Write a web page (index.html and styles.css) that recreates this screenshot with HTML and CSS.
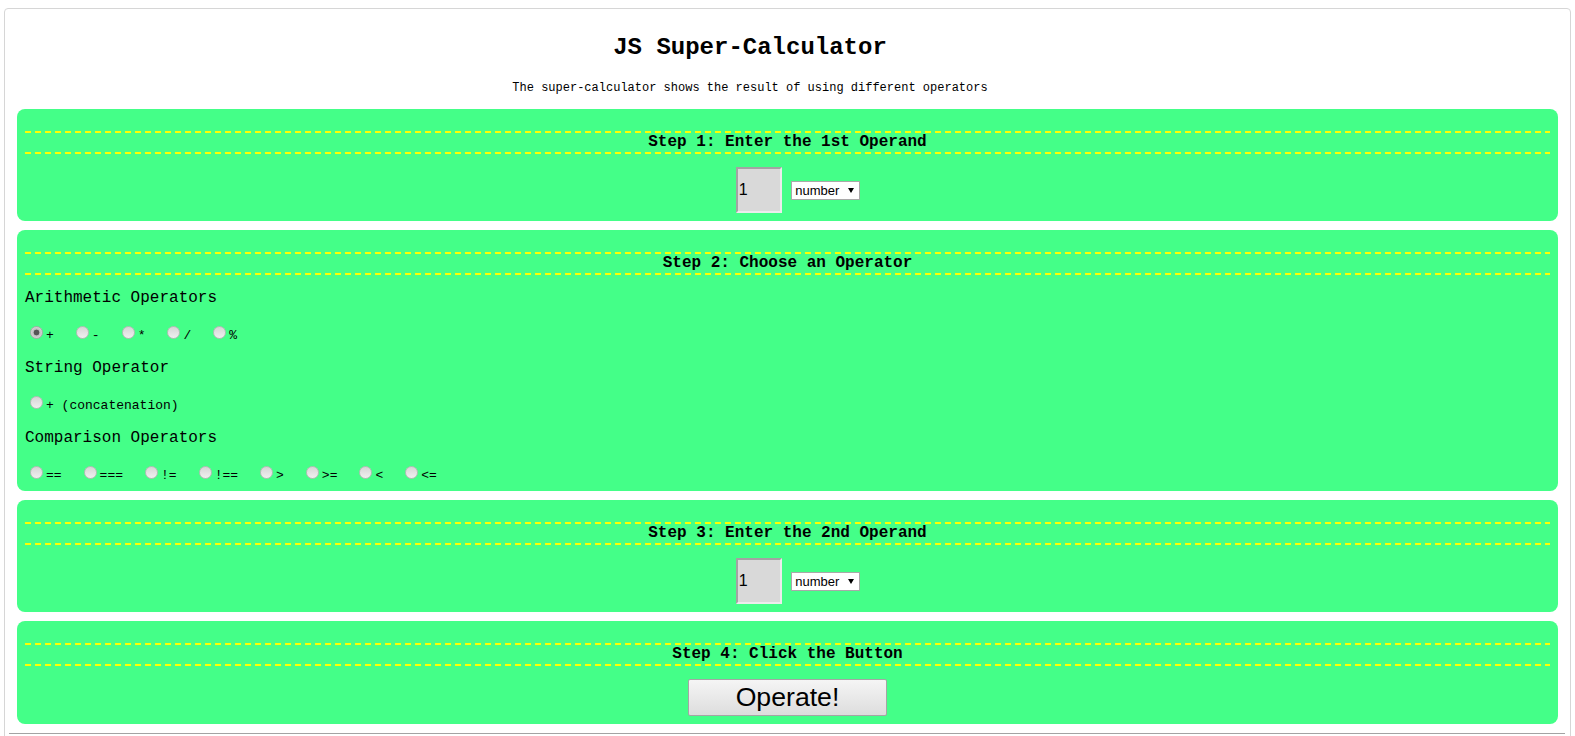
FILE: index.html
```
<!DOCTYPE html>
<html>
<head>
<meta charset="utf-8">
<title>JS Super-Calculator</title>
<link rel="stylesheet" href="styles.css">
</head>
<body>
<div class="page">
  <header class="head">
    <h1 class="title">JS Super-Calculator</h1>
    <p class="sub">The super-calculator shows the result of using different operators</p>
  </header>

  <section class="panel">
    <h2 class="step">Step 1: Enter the 1st Operand</h2>
    <div class="operand"><input class="num" type="text" value="1"> <span class="sel"><select><option>number</option><option>string</option></select></span></div>
  </section>

  <section class="panel">
    <h2 class="step">Step 2: Choose an Operator</h2>
    <p class="grp first">Arithmetic Operators</p>
    <div class="ops"><label><input type="radio" name="op" checked>+</label><label><input type="radio" name="op">-</label><label><input type="radio" name="op">*</label><label><input type="radio" name="op">/</label><label><input type="radio" name="op">%</label></div>
    <p class="grp">String Operator</p>
    <div class="ops"><label><input type="radio" name="op">+ (concatenation)</label></div>
    <p class="grp">Comparison Operators</p>
    <div class="ops"><label><input type="radio" name="op">==</label><label><input type="radio" name="op">===</label><label><input type="radio" name="op">!=</label><label><input type="radio" name="op">!==</label><label><input type="radio" name="op">&gt;</label><label><input type="radio" name="op">&gt;=</label><label><input type="radio" name="op">&lt;</label><label><input type="radio" name="op">&lt;=</label></div>
  </section>

  <section class="panel">
    <h2 class="step">Step 3: Enter the 2nd Operand</h2>
    <div class="operand"><input class="num" type="text" value="1"> <span class="sel"><select><option>number</option><option>string</option></select></span></div>
  </section>

  <section class="panel">
    <h2 class="step">Step 4: Click the Button</h2>
    <div class="action"><button class="go" type="button">Operate!</button></div>
  </section>

  <div class="result"></div>
</div>
</body>
</html>
```
FILE: styles.css
```
html {
  overflow: hidden;
}
body {
  margin: 8px 4px;
  font-family: "Liberation Mono", "Courier New", monospace;
  color: #000;
  background: #fff;
}
.page {
  border: 1px solid #d6d6d6;
  border-radius: 4px;
  padding: 0 12px;
}
.head {
  padding: 25px 75px 0 0;
  text-align: center;
}
.title {
  margin: 0;
  font-size: 24px;
  line-height: 27px;
  font-weight: bold;
}
.sub {
  margin: 20px 0 14px;
  font-size: 12px;
  line-height: 14px;
}
.panel {
  background: #44ff88;
  border-radius: 8px;
  padding: 8px;
  margin-bottom: 9px;
}
.step {
  margin: 14px 0 0;
  padding: 2px 0;
  font-size: 16px;
  line-height: 19px;
  font-weight: bold;
  text-align: center;
  background:
    repeating-linear-gradient(to right, #ffff00 0 6px, transparent 6px 10px) left top / 100% 2px no-repeat,
    repeating-linear-gradient(to right, #ffff00 0 6px, transparent 6px 10px) left bottom / 100% 2px no-repeat;
}
.operand {
  margin-top: 13px;
  padding-left: 21px;
  text-align: center;
  font-size: 16px;
}
.num {
  width: 40px;
  height: 42px;
  padding: 0 1px;
  box-sizing: content-box;
  margin: 0;
  border-style: solid;
  border-width: 2px;
  border-color: #a3a3a3 #ececec #ececec #a3a3a3;
  background: #d9d9d9;
  font-family: "Liberation Sans", Arial, sans-serif;
  font-size: 16px;
  color: #000;
  outline: none;
}
.sel {
  position: relative;
  display: inline-block;
}
.sel select {
  -webkit-appearance: none;
  appearance: none;
  width: 69px;
  height: 19px;
  margin: 0;
  padding: 0 14px 0 3px;
  border: 1px solid #a9a9a9;
  border-radius: 0;
  background: #fff;
  font-family: "Liberation Sans", Arial, sans-serif;
  font-size: 13px;
  color: #000;
}
.sel::after {
  content: "";
  position: absolute;
  right: 6px;
  top: 7px;
  border-left: 3.5px solid transparent;
  border-right: 3.5px solid transparent;
  border-top: 5px solid #000;
  pointer-events: none;
}
.grp {
  margin: 16px 0 0;
  font-size: 16px;
  line-height: 19px;
}
.grp.first {
  margin-top: 14px;
}
.ops {
  margin-top: 15px;
  font-size: 13px;
  line-height: normal;
}
.ops label {
  margin-right: 17px;
}
.ops input {
  -webkit-appearance: none;
  appearance: none;
  width: 13px;
  height: 13px;
  margin: 3px 3px 0 5px;
  box-sizing: border-box;
  border: 1px solid #b9b9b9;
  border-radius: 50%;
  background: linear-gradient(#d6d6d6, #efefef);
  vertical-align: baseline;
}
.ops input:checked {
  background: radial-gradient(circle, #555 0 2.6px, #bdbdbd 3.2px, #dadada 6px);
  border-color: #a8a8a8;
}
.action {
  margin-top: 13px;
  text-align: center;
  font-size: 16px;
}
.go {
  width: 199px;
  height: 37px;
  margin: 0;
  padding: 0;
  border: 1px solid #a5a5a5;
  border-radius: 2px;
  background: linear-gradient(#f5f5f5, #dddddd);
  font-family: "Liberation Sans", Arial, sans-serif;
  font-size: 26.67px;
  color: #000;
}
.result {
  margin: 0 -7px 0 -8px;
  border-top: 1px solid #a3a3a3;
  height: 120px;
}
```
